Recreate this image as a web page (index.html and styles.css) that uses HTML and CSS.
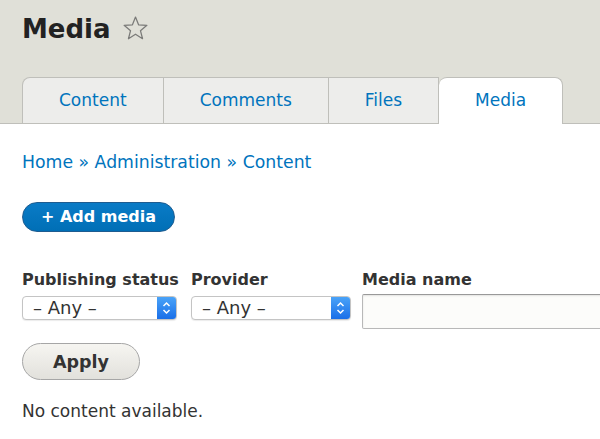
FILE: index.html
```html
<!DOCTYPE html>
<html lang="en">
<head>
  <meta charset="UTF-8">
  <meta name="viewport" content="width=device-width, initial-scale=1.0">
  <title>Media</title>
  <link rel="stylesheet" href="styles.css">
</head>
<body>
  <header class="page-header">
    <h1 class="page-title">
      Media
      <svg class="star" width="25" height="24" viewBox="0 0 24 23">
        <polygon points="12,1 14.94,8.45 22.94,8.95 16.76,14.05 18.76,21.8 12,17.5 5.24,21.8 7.24,14.05 1.06,8.95 9.06,8.45" fill="none" stroke="#7a7a78" stroke-width="1.2" stroke-linejoin="round"/>
      </svg>
    </h1>
    <ul class="tabs">
      <li class="tab first"><a href="#">Content</a></li>
      <li class="tab"><a href="#">Comments</a></li>
      <li class="tab"><a href="#">Files</a></li>
      <li class="tab active"><a href="#">Media</a></li>
    </ul>
  </header>

  <main class="content">
    <nav class="breadcrumb">
      <a href="#">Home</a> » <a href="#">Administration</a> » <a href="#">Content</a>
    </nav>

    <a class="button-primary" href="#">+ Add media</a>

    <form class="filters">
      <div class="filter filter-status">
        <label>Publishing status</label>
        <div class="select select-status">
          <span class="select-value">– Any –</span>
          <span class="select-arrows">
            <svg width="9" height="14" viewBox="0 0 9 14">
              <polyline points="1.5,5 4.5,2 7.5,5" fill="none" stroke="#fff" stroke-width="1.5"/>
              <polyline points="1.5,9 4.5,12 7.5,9" fill="none" stroke="#fff" stroke-width="1.5"/>
            </svg>
          </span>
        </div>
      </div>
      <div class="filter filter-provider">
        <label>Provider</label>
        <div class="select select-provider">
          <span class="select-value">– Any –</span>
          <span class="select-arrows">
            <svg width="9" height="14" viewBox="0 0 9 14">
              <polyline points="1.5,5 4.5,2 7.5,5" fill="none" stroke="#fff" stroke-width="1.5"/>
              <polyline points="1.5,9 4.5,12 7.5,9" fill="none" stroke="#fff" stroke-width="1.5"/>
            </svg>
          </span>
        </div>
      </div>
      <div class="filter filter-name">
        <label>Media name</label>
        <input class="form-text" type="text">
      </div>
    </form>

    <button class="button" type="button">Apply</button>

    <p class="empty">No content available.</p>
  </main>
</body>
</html>
```

FILE: styles.css
```css
* {
  box-sizing: border-box;
}

body {
  margin: 0;
  font-family: "DejaVu Sans", Verdana, sans-serif;
  font-size: 17px;
  color: #333;
  background: #fff;
  overflow-x: hidden;
}

a {
  color: #0074bd;
  text-decoration: none;
}

.page-header {
  background: #e0e0d8;
  padding: 0 22px;
  border-bottom: 1px solid #bfbfba;
}

.page-title {
  display: flex;
  align-items: center;
  gap: 12px;
  margin: 0;
  padding-top: 12px;
  font-size: 26px;
  line-height: 34px;
  font-weight: bold;
  color: #222;
}

.star {
  margin-bottom: 2px;
}

.tabs {
  display: flex;
  list-style: none;
  margin: 31px 0 0;
  padding: 0;
}

.tab a {
  display: block;
  height: 46px;
  line-height: 44px;
  padding: 0 36px;
  background: #ededeb;
  border: 1px solid #bfbfba;
  border-bottom: none;
  border-left: none;
  font-size: 17px;
}

.tab.first a {
  border-left: 1px solid #bfbfba;
  border-top-left-radius: 8px;
}

.tab.active {
  margin-bottom: -1px;
}

.tab.active a {
  height: 47px;
  background: #fff;
  border-left: none;
  border-radius: 8px 8px 0 0;
}

.content {
  padding: 0 22px;
}

.breadcrumb {
  margin-top: 27px;
  line-height: 22px;
  font-size: 17.3px;
  color: #0074bd;
}

.button-primary {
  display: inline-block;
  margin-top: 29px;
  height: 30px;
  line-height: 28px;
  padding: 0 18px;
  background: linear-gradient(#0a7bc6, #006fb6);
  border: 1px solid #1e5c90;
  border-radius: 20px;
  color: #fff;
  font-size: 16px;
  font-weight: bold;
}

.filters {
  display: flex;
  margin-top: 38px;
}

.filter {
  display: flex;
  flex-direction: column;
  margin-right: 10px;
  flex-shrink: 0;
}

.filter label {
  font-size: 16px;
  font-weight: bold;
  line-height: 20px;
  margin-bottom: 4px;
  color: #333;
}

.filter-status {
  width: 159px;
}

.filter-provider {
  width: 161px;
}

.select {
  display: flex;
  align-items: stretch;
  height: 24px;
  margin-top: 2px;
  background: #fff;
  border: 1px solid #c4c4c4;
  border-radius: 4px;
  box-shadow: 0 1px 1px rgba(0, 0, 0, 0.08);
  overflow: hidden;
}

.select-status {
  width: 155px;
}

.select-provider {
  width: 160px;
}

.select-value {
  flex: 1;
  padding-left: 10px;
  font-size: 18px;
  line-height: 22px;
  color: #333;
}

.select-arrows {
  display: flex;
  align-items: center;
  justify-content: center;
  width: 19px;
  background: linear-gradient(#4aa3f8, #1a6fe8);
}

.form-text {
  width: 260px;
  height: 35px;
  margin: 0;
  background: #fcfcfa;
  border: 1px solid #b8b8b8;
  border-top-color: #999;
  border-radius: 2px;
  box-shadow: inset 0 1px 2px rgba(0, 0, 0, 0.1);
}

.button {
  display: block;
  margin-top: 14px;
  height: 37px;
  padding: 0 30px;
  background: linear-gradient(#f6f5f1, #e2e1dc);
  border: 1px solid #a6a6a6;
  border-radius: 20px;
  font-family: "DejaVu Sans", Verdana, sans-serif;
  font-size: 17.5px;
  font-weight: bold;
  color: #333;
}

.empty {
  margin: 20px 0 0;
  line-height: 22px;
  font-size: 17px;
}
```
